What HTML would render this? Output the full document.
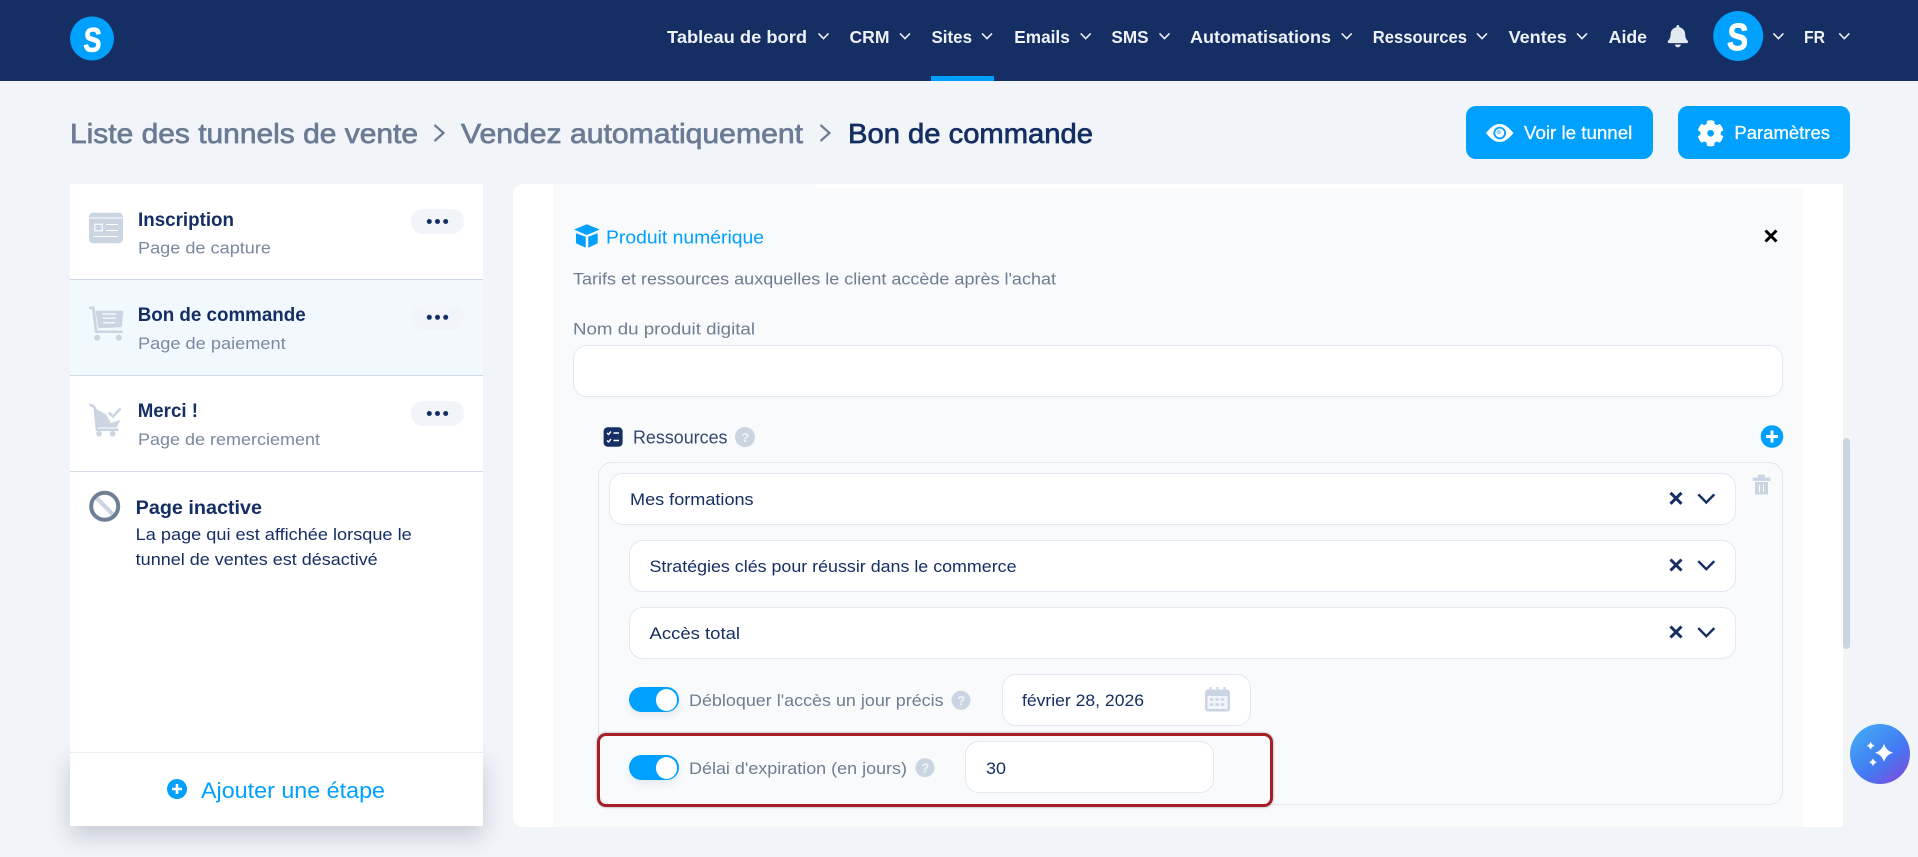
<!DOCTYPE html>
<html lang="fr">
<head>
<meta charset="utf-8">
<title>Bon de commande</title>
<style>
html,body{margin:0;padding:0;width:1918px;height:857px;overflow:hidden;background:#f1f4f9}
body{position:relative;font-family:"Liberation Sans",sans-serif}
.b{position:absolute;box-sizing:border-box}
.f{background:#fff;border:1.5px solid #e2e8f0;border-radius:14px}
svg#o{position:absolute;left:0;top:0;pointer-events:none}
text{font-family:"Liberation Sans",sans-serif}
.nav{font-size:17.5px;font-weight:700;fill:#eef2f7}
.bc{font-size:28px;fill:#6b7b93;stroke:#6b7b93;stroke-width:.7px}
.bcd{font-size:28px;fill:#152e63;stroke:#152e63;stroke-width:.7px}
.btn{font-size:18px;fill:#fff;stroke:#fff;stroke-width:.25px}
.tt{font-size:19px;font-weight:700;fill:#152e63}
.sub{font-size:17px;fill:#7a899f}
.dk{font-size:17px;fill:#152e63}
.gr{font-size:17px;fill:#6f7d91}
.bl{font-size:18.5px;fill:#00a0ff}
</style>
</head>
<body>
<div class="b" style="left:0;top:0;width:1918px;height:81px;background:#152e63"></div>
<div class="b" style="left:931px;top:76px;width:63px;height:5px;background:#00a0ff"></div>
<div class="b" style="left:1466px;top:106px;width:187px;height:53px;background:#00a0ff;border-radius:10px"></div>
<div class="b" style="left:1678px;top:106px;width:172px;height:53px;background:#00a0ff;border-radius:10px"></div>

<div class="b" style="left:70px;top:752px;width:413px;height:74px;box-shadow:0 10px 22px rgba(30,40,70,.2)"></div>
<div class="b" style="left:70px;top:184px;width:413px;height:642px;background:#fff"></div>
<div class="b" style="left:70px;top:280px;width:413px;height:95px;background:#f1f9ff"></div>
<div class="b" style="left:70px;top:279px;width:413px;height:1px;background:#cfd8e4"></div>
<div class="b" style="left:70px;top:375px;width:413px;height:1px;background:#cdd8e6"></div>
<div class="b" style="left:70px;top:471px;width:413px;height:1px;background:#d5dae6"></div>
<div class="b" style="left:70px;top:752px;width:413px;height:1px;background:#e9ecf1"></div>
<div class="b" style="left:411px;top:209px;width:53px;height:25px;background:#f1f4f9;border-radius:12px"></div>
<div class="b" style="left:411px;top:305px;width:53px;height:25px;background:#f1f4f9;border-radius:12px"></div>
<div class="b" style="left:411px;top:401px;width:53px;height:25px;background:#f1f4f9;border-radius:12px"></div>

<div class="b" style="left:513px;top:184px;width:330px;height:643px;background:#fff;border-radius:10px 0 0 10px"></div>
<div class="b" style="left:843px;top:184px;width:1000px;height:643px;background:#fff"></div>
<div class="b" style="left:553px;top:184px;width:264px;height:643px;background:#f8fafc"></div>
<div class="b" style="left:817px;top:188px;width:986px;height:639px;background:#f8fafc"></div>
<div class="b" style="left:1843px;top:184px;width:7px;height:643px;background:#f3f4f6;border-radius:0 4px 4px 0"></div>
<div class="b" style="left:1843px;top:438px;width:7px;height:211px;background:#cbd5e1;border-radius:4px"></div>

<div class="b f" style="left:573px;top:345px;width:1210px;height:52px"></div>
<div class="b" style="left:598px;top:462px;width:1185px;height:343px;border:1.5px solid #e2e8f0;border-radius:14px"></div>
<div class="b f" style="left:609px;top:473px;width:1127px;height:52px"></div>
<div class="b f" style="left:629px;top:540px;width:1107px;height:52px"></div>
<div class="b f" style="left:629px;top:607px;width:1107px;height:52px"></div>
<div class="b f" style="left:1001.5px;top:674px;width:249px;height:52px"></div>
<div class="b f" style="left:965px;top:741px;width:249px;height:52px"></div>
<div class="b" style="left:629px;top:687px;width:50px;height:25px;background:#00a0ff;border-radius:13px;box-shadow:0 4px 8px rgba(30,60,110,.08)"></div>
<div class="b" style="left:655.5px;top:688.5px;width:21.500px;height:22px;background:#fff;border-radius:50%"></div>
<div class="b" style="left:629px;top:755px;width:50px;height:25px;background:#00a0ff;border-radius:13px;box-shadow:0 4px 8px rgba(30,60,110,.08)"></div>
<div class="b" style="left:655.5px;top:756.5px;width:21.500px;height:22px;background:#fff;border-radius:50%"></div>
<div class="b" style="left:597px;top:733px;width:675.5px;height:74px;border:3.5px solid #a51f24;border-radius:9px;box-shadow:0 0 2px rgba(60,60,60,.55)"></div>

<svg id="o" width="1918" height="857" viewBox="0 0 1918 857" xmlns="http://www.w3.org/2000/svg">
<defs>
<linearGradient id="g" x1="0.15" y1="0.1" x2="0.85" y2="0.95"><stop offset="0" stop-color="#41a6f4"/><stop offset=".6" stop-color="#4478f3"/><stop offset="1" stop-color="#7a4fdc"/></linearGradient>
<path id="cv" d="M-5-2.600 0 2.600 5-2.600" fill="none" stroke="#e8edf4" stroke-width="1.600"/>
<path id="x" d="M-5.500-5.500 5.500 5.500M5.500-5.500-5.500 5.500" fill="none" stroke="#152e63" stroke-width="3"/>
<path id="dn" d="M-8-4.300 0 3.800 8-4.300" fill="none" stroke="#152e63" stroke-width="2.400"/>
<g id="dots" fill="#152e63"><circle cx="-8.200" r="2.500"/><circle r="2.500"/><circle cx="8.200" r="2.500"/></g>
</defs>

<!-- header -->
<circle cx="92" cy="38.500" r="22" fill="#00a0ff"/>
<text x="83" y="51.300" textLength="18" lengthAdjust="spacingAndGlyphs" transform="skewX(-3) translate(2.700 0)" style="font-size:34px;font-weight:700;fill:#fff;stroke:#fff;stroke-width:.8px">S</text>
<text class="nav" x="667" y="43" textLength="140" lengthAdjust="spacingAndGlyphs">Tableau de bord</text>
<use href="#cv" x="823.500" y="36"/>
<text class="nav" x="849.500" y="43" textLength="40" lengthAdjust="spacingAndGlyphs">CRM</text>
<use href="#cv" x="905" y="36"/>
<text class="nav" x="931.500" y="43" textLength="40.500" lengthAdjust="spacingAndGlyphs">Sites</text>
<use href="#cv" x="987" y="36"/>
<text class="nav" x="1014.300" y="43" textLength="55.500" lengthAdjust="spacingAndGlyphs">Emails</text>
<use href="#cv" x="1085.700" y="36"/>
<text class="nav" x="1111.400" y="43" textLength="37.200" lengthAdjust="spacingAndGlyphs">SMS</text>
<use href="#cv" x="1164.500" y="36"/>
<text class="nav" x="1190" y="43" textLength="141" lengthAdjust="spacingAndGlyphs">Automatisations</text>
<use href="#cv" x="1346.700" y="36"/>
<text class="nav" x="1372.800" y="43" textLength="94.200" lengthAdjust="spacingAndGlyphs">Ressources</text>
<use href="#cv" x="1482" y="36"/>
<text class="nav" x="1508.600" y="43" textLength="58.200" lengthAdjust="spacingAndGlyphs">Ventes</text>
<use href="#cv" x="1582" y="36"/>
<text class="nav" x="1608.700" y="43" textLength="38.300" lengthAdjust="spacingAndGlyphs">Aide</text>
<g transform="translate(1667.700 25) scale(.0455 .0435)" fill="#e2e8f0"><path d="M224 512c35.320 0 63.970-28.650 63.970-64H160.030c0 35.350 28.650 64 63.970 64zm215.390-149.710c-19.320-20.760-55.470-51.990-55.470-154.290 0-77.700-54.480-139.900-127.940-155.160V32c0-17.670-14.320-32-31.980-32s-31.980 14.330-31.980 32v20.840C118.560 68.100 64.080 130.300 64.080 208c0 102.300-36.150 133.530-55.470 154.290-6 6.450-8.660 14.160-8.610 21.710.11 16.400 12.980 32 32.100 32h383.800c19.120 0 32-15.600 32.100-32 .05-7.550-2.610-15.270-8.610-21.710z"/></g>
<circle cx="1738.200" cy="36" r="25" fill="#00a0ff"/>
<text x="1726.700" y="49.800" textLength="21" lengthAdjust="spacingAndGlyphs" transform="skewX(-3) translate(2.600 0)" style="font-size:38px;font-weight:700;fill:#fff;stroke:#fff;stroke-width:.9px">S</text>
<use href="#cv" x="1778.400" y="36"/>
<text class="nav" x="1804" y="43" textLength="21" lengthAdjust="spacingAndGlyphs">FR</text>
<use href="#cv" x="1844.300" y="36"/>

<!-- breadcrumb -->
<text class="bc" x="70" y="143" textLength="348" lengthAdjust="spacingAndGlyphs">Liste des tunnels de vente</text>
<path d="M434.500 125 443.500 133 434.500 141" fill="none" stroke="#6b7b93" stroke-width="2.200"/>
<text class="bc" x="461" y="143" textLength="342" lengthAdjust="spacingAndGlyphs">Vendez automatiquement</text>
<path d="M820.500 125 829.500 133 820.500 141" fill="none" stroke="#6b7b93" stroke-width="2.200"/>
<text class="bcd" x="848" y="143" textLength="245" lengthAdjust="spacingAndGlyphs">Bon de commande</text>

<!-- buttons -->
<path d="M1485.900 133c5-6 9-9 13.800-9s8.800 3 13.800 9c-5 6-9 9-13.800 9s-8.800-3-13.800-9z" fill="#fff"/>
<circle cx="1499.700" cy="133" r="6.300" fill="#00a0ff"/><circle cx="1499.700" cy="133" r="4.500" fill="#fff"/><circle cx="1498.700" cy="132" r="2.200" fill="#8fd2ff"/>
<text class="btn" x="1524" y="139" textLength="108.300" lengthAdjust="spacingAndGlyphs">Voir le tunnel</text>
<g transform="translate(1697.800 120.500) scale(.05)" fill="#fff" stroke="#fff" stroke-width="26"><path d="M487.400 315.700l-42.600-24.600c4.300-23.200 4.300-47 0-70.200l42.600-24.600c4.900-2.800 7.100-8.600 5.500-14-11.100-35.600-30-67.800-54.700-94.600-3.800-4.100-10-5.100-14.800-2.300L380.800 110c-17.900-15.400-38.500-27.300-60.800-35.100V25.800c0-5.600-3.900-10.500-9.400-11.700-36.700-8.200-74.300-7.800-109.200 0-5.500 1.200-9.400 6.100-9.400 11.700V75c-22.200 7.900-42.800 19.800-60.800 35.100L88.700 85.500c-4.900-2.800-11-1.900-14.800 2.300-24.700 26.700-43.600 58.900-54.700 94.600-1.700 5.400.6 11.200 5.500 14L67.300 221c-4.300 23.200-4.300 47 0 70.200l-42.600 24.600c-4.900 2.800-7.100 8.600-5.500 14 11.100 35.600 30 67.800 54.700 94.600 3.800 4.100 10 5.100 14.800 2.300l42.600-24.600c17.900 15.400 38.500 27.300 60.800 35.100v49.200c0 5.600 3.900 10.500 9.400 11.700 36.700 8.200 74.300 7.800 109.200 0 5.500-1.200 9.400-6.100 9.400-11.700v-49.200c22.200-7.900 42.800-19.800 60.800-35.100l42.600 24.600c4.900 2.800 11 1.900 14.800-2.300 24.700-26.700 43.600-58.900 54.700-94.600 1.500-5.500-.7-11.300-5.600-14.100zM256 336c-44.100 0-80-35.900-80-80s35.900-80 80-80 80 35.900 80 80-35.900 80-80 80z"/></g>
<text class="btn" x="1734.400" y="139" textLength="95.600" lengthAdjust="spacingAndGlyphs">Paramètres</text>

<!-- sidebar -->
<rect x="89" y="212.700" width="34" height="30.500" rx="4" fill="#cbd5e1"/>
<path d="M89 218H123" stroke="#fff" stroke-width="1"/>
<rect x="94.700" y="224.200" width="7.600" height="6.600" fill="none" stroke="#fff" stroke-width="1.100"/>
<path d="M106 224.500H118M106 230.500H118M94 236.500H118" stroke="#fff" stroke-width="1.100"/>
<text class="tt" x="138" y="226" textLength="96" lengthAdjust="spacingAndGlyphs">Inscription</text>
<text class="sub" x="138" y="253.500" textLength="133" lengthAdjust="spacingAndGlyphs">Page de capture</text>
<use href="#dots" x="437.500" y="221.500"/>

<path d="M89 306.500H94.500L97.500 330.500H122.700V333H95L92 309H89z" fill="#cbd5e1"/>
<path d="M95.500 310.700H123.300L121.700 327.300 98.300 328.300z" fill="#cbd5e1"/>
<path d="M102.300 314H116M102.800 318.300H116M103.300 322.700H115" stroke="#f1f9ff" stroke-width="1.500"/>
<circle cx="97.300" cy="337.700" r="3" fill="#cbd5e1"/><circle cx="118.700" cy="337.700" r="3" fill="#cbd5e1"/>
<text class="tt" x="137.700" y="321" textLength="168" lengthAdjust="spacingAndGlyphs">Bon de commande</text>
<text class="sub" x="138" y="349" textLength="147.700" lengthAdjust="spacingAndGlyphs">Page de paiement</text>
<use href="#dots" x="437.500" y="317.300"/>

<path d="M89 403.500 93 404.500 96 407 98 428.500H118.500V431H95.700L93.500 408 89 405.500z" fill="#cbd5e1"/>
<path d="M94.500 408 106 414.500 111 423 120.500 420 116.500 427.500H98z" fill="#cbd5e1"/>
<path d="M108.500 412.500 113 416.500 120.500 408.500" fill="none" stroke="#cbd5e1" stroke-width="2.600"/>
<circle cx="99" cy="433.700" r="2.800" fill="#cbd5e1"/><circle cx="112.700" cy="433.700" r="2.800" fill="#cbd5e1"/>
<text class="tt" x="137.700" y="417" textLength="60.300" lengthAdjust="spacingAndGlyphs">Merci !</text>
<text class="sub" x="138" y="445" textLength="182" lengthAdjust="spacingAndGlyphs">Page de remerciement</text>
<use href="#dots" x="437.500" y="413.500"/>

<path d="M94 495.500 115.500 517" stroke="#cbd5e1" stroke-width="4.200"/>
<circle cx="104.700" cy="506.300" r="13.500" fill="none" stroke="#6f7f96" stroke-width="4"/>
<text class="tt" x="135.700" y="514" textLength="126.300" lengthAdjust="spacingAndGlyphs">Page inactive</text>
<text class="dk" x="135.700" y="540" textLength="276" lengthAdjust="spacingAndGlyphs">La page qui est affichée lorsque le</text>
<text class="dk" x="135.700" y="565" textLength="242" lengthAdjust="spacingAndGlyphs">tunnel de ventes est désactivé</text>

<circle cx="177" cy="789" r="10" fill="#00a0ff"/>
<path d="M172 789H182M177 784V794" stroke="#fff" stroke-width="2.600"/>
<text x="201" y="798" textLength="184" lengthAdjust="spacingAndGlyphs" style="font-size:22.500px;fill:#00a0ff">Ajouter une étape</text>

<!-- product -->
<path d="M586.800 224.300 599.700 229.500 586.800 235 574 229.500z" fill="#00a0ff"/>
<path d="M576 233.300 585.700 236.700V247.700L576 243.300z" fill="#00a0ff"/>
<path d="M597.700 233.300 588.300 236.700V247.700L597.700 243.300z" fill="#00a0ff"/>
<text class="bl" x="606" y="243.300" textLength="158" lengthAdjust="spacingAndGlyphs">Produit numérique</text>
<path d="M1765.500 230.500 1776.500 241.500M1776.500 230.500 1765.500 241.500" stroke="#000" stroke-width="3"/>
<text class="gr" x="573" y="284.300" textLength="483" lengthAdjust="spacingAndGlyphs">Tarifs et ressources auxquelles le client accède après l'achat</text>
<text class="gr" x="573" y="334.300" textLength="182" lengthAdjust="spacingAndGlyphs">Nom du produit digital</text>

<rect x="603.600" y="427.300" width="19" height="19.400" rx="4" fill="#152e63"/>
<path d="M613.500 433H619M613.500 440.500H619M607 433 608.500 434.500 611 431.500M607 440.500 608.500 442 611 439" fill="none" stroke="#fff" stroke-width="1.400"/>
<text x="633" y="443.300" textLength="94.500" lengthAdjust="spacingAndGlyphs" style="font-size:18.500px;fill:#34496b">Ressources</text>
<circle cx="745" cy="437" r="10" fill="#cbd5e1"/>
<text x="741.300" y="442" style="font-size:13px;font-weight:700;fill:#f1f4f9">?</text>
<circle cx="1772" cy="436.500" r="11.300" fill="#00a0ff"/>
<path d="M1766 436.500H1778M1772 430.500V442.500" stroke="#fff" stroke-width="3"/>

<text class="dk" x="630" y="505" textLength="123.600" lengthAdjust="spacingAndGlyphs">Mes formations</text>
<use href="#x" x="1676" y="498.300"/><use href="#dn" x="1706.300" y="498.700"/>
<text class="dk" x="649.500" y="572" textLength="367" lengthAdjust="spacingAndGlyphs">Stratégies clés pour réussir dans le commerce</text>
<use href="#x" x="1676" y="565"/><use href="#dn" x="1706.300" y="565.400"/>
<text class="dk" x="649.500" y="639" textLength="90.500" lengthAdjust="spacingAndGlyphs">Accès total</text>
<use href="#x" x="1676" y="632"/><use href="#dn" x="1706.300" y="632.400"/>

<path d="M1753 478H1770V480.500H1753zM1758.500 478V475H1764.500V478" fill="#cbd5e1" stroke="#cbd5e1" stroke-width=".8"/>
<path d="M1755 482H1768V494.500H1755z" fill="#cbd5e1"/>
<path d="M1759.500 484.500V492M1763.500 484.500V492" stroke="#f8fafc" stroke-width="1"/>

<text class="gr" x="689" y="706" textLength="254.600" lengthAdjust="spacingAndGlyphs">Débloquer l'accès un jour précis</text>
<circle cx="961" cy="700.300" r="9.500" fill="#cbd5e1"/>
<text x="957.500" y="705" style="font-size:12.500px;font-weight:700;fill:#f1f4f9">?</text>
<text class="dk" x="1022" y="706" textLength="122" lengthAdjust="spacingAndGlyphs">février 28, 2026</text>
<rect x="1205" y="689.500" width="25" height="22" rx="3" fill="#cbd5e1"/>
<path d="M1210.500 687V692M1217.500 687V692M1224.500 687V692" stroke="#cbd5e1" stroke-width="2"/>
<rect x="1207.500" y="696" width="20" height="13" fill="#f1f4f9"/>
<path d="M1210 699.500H1225M1210 704.500H1225" stroke="#cbd5e1" stroke-width="2.400" stroke-dasharray="3.400 2"/>

<text class="gr" x="689" y="774" textLength="218" lengthAdjust="spacingAndGlyphs">Délai d'expiration (en jours)</text>
<circle cx="925" cy="767.700" r="9.500" fill="#cbd5e1"/>
<text x="921.500" y="772.500" style="font-size:12.500px;font-weight:700;fill:#f1f4f9">?</text>
<text class="dk" x="986" y="774" textLength="20" lengthAdjust="spacingAndGlyphs">30</text>

<!-- fab -->
<circle cx="1880" cy="754" r="30" fill="url(#g)"/>
<path d="M1884 743.700Q1886 750.700 1893 752.700 1886 754.700 1884 761.700 1882 754.700 1875 752.700 1882 750.700 1884 743.700z" fill="#fff"/>
<path d="M1870.700 741.700Q1871.700 744.700 1874.700 745.700 1871.700 746.700 1870.700 749.700 1869.700 746.700 1866.700 745.700 1869.700 744.700 1870.700 741.700z" fill="#fff"/>
<path d="M1873 758.300Q1874 761.300 1877 762.300 1874 763.300 1873 766.300 1872 763.300 1869 762.300 1872 761.300 1873 758.300z" fill="#fff"/>
</svg>
</body>
</html>
